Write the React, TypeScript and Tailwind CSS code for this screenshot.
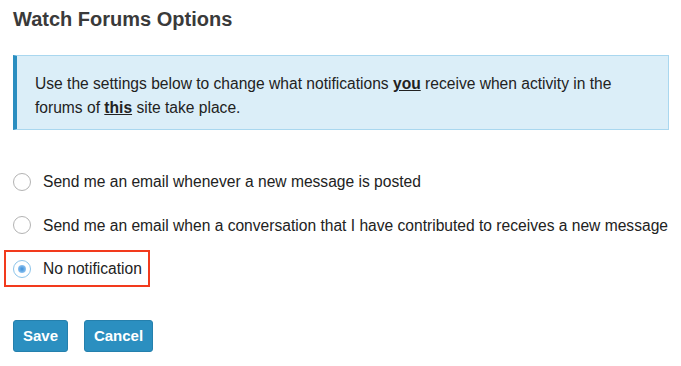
import React from 'react';

const options = [
  { id: 'all', label: 'Send me an email whenever a new message is posted', checked: false },
  { id: 'contrib', label: 'Send me an email when a conversation that I have contributed to receives a new message', checked: false },
  { id: 'none', label: 'No notification', checked: true },
];

function Radio({ checked }: { checked: boolean }) {
  if (checked) {
    return (
      <span className="w-[18px] h-[18px] rounded-full border border-[#8cc4ea] bg-white flex items-center justify-center shrink-0">
        <span className="w-[8px] h-[8px] rounded-full bg-[radial-gradient(circle,#3b8fd9_0%,#7fb9ec_60%,#d4e8f9_100%)]" />
      </span>
    );
  }
  return <span className="w-[18px] h-[18px] rounded-full border border-[#b3b3b3] bg-white shrink-0" />;
}

export default function App() {
  return (
    <div className="w-[681px] h-[366px] bg-white text-[#333] font-['Liberation_Sans',Arial,sans-serif] px-[13px] pt-[7px]">
      <h2 className="text-[20px] font-bold leading-[24px] text-[#3a3a3a]">Watch Forums Options</h2>

      {/* Info box */}
      <div className="mt-[24px] w-[656px] h-[75px] bg-[#dbeef8] border border-[#a9d7ef] border-l-[4px] border-l-[#2a8ec0] pl-[18px] pr-2 pt-[16px] text-[15.6px] leading-[24px] text-[#222]">
        Use the settings below to change what notifications <b className="underline">you</b> receive when activity in the
        <br />
        forums of <b className="underline">this</b> site take place.
      </div>

      {/* Options */}
      <div className="mt-[30px] flex flex-col">
        {options.map(o => (
          <div key={o.id} className="h-[43.5px] flex items-center">
            <label
              className={`flex items-center gap-[12px] text-[15.6px] text-[#222] whitespace-nowrap ${
                o.checked ? 'outline-2 outline-[#f23a1d] -ml-[7px] pl-[7px] pr-[6px] h-[33px]' : ''
              }`}
            >
              <Radio checked={o.checked} />
              <span>{o.label}</span>
            </label>
          </div>
        ))}
      </div>

      {/* Actions */}
      <div className="mt-[29px] flex gap-[16px]">
        <button className="w-[55px] h-[32px] pt-[2px] rounded-[3px] bg-[#2b8fc0] border border-[#2580ad] text-white text-[15px] font-bold">
          Save
        </button>
        <button className="w-[69px] h-[32px] pt-[2px] rounded-[3px] bg-[#2b8fc0] border border-[#2580ad] text-white text-[15px] font-bold">
          Cancel
        </button>
      </div>
    </div>
  );
}
